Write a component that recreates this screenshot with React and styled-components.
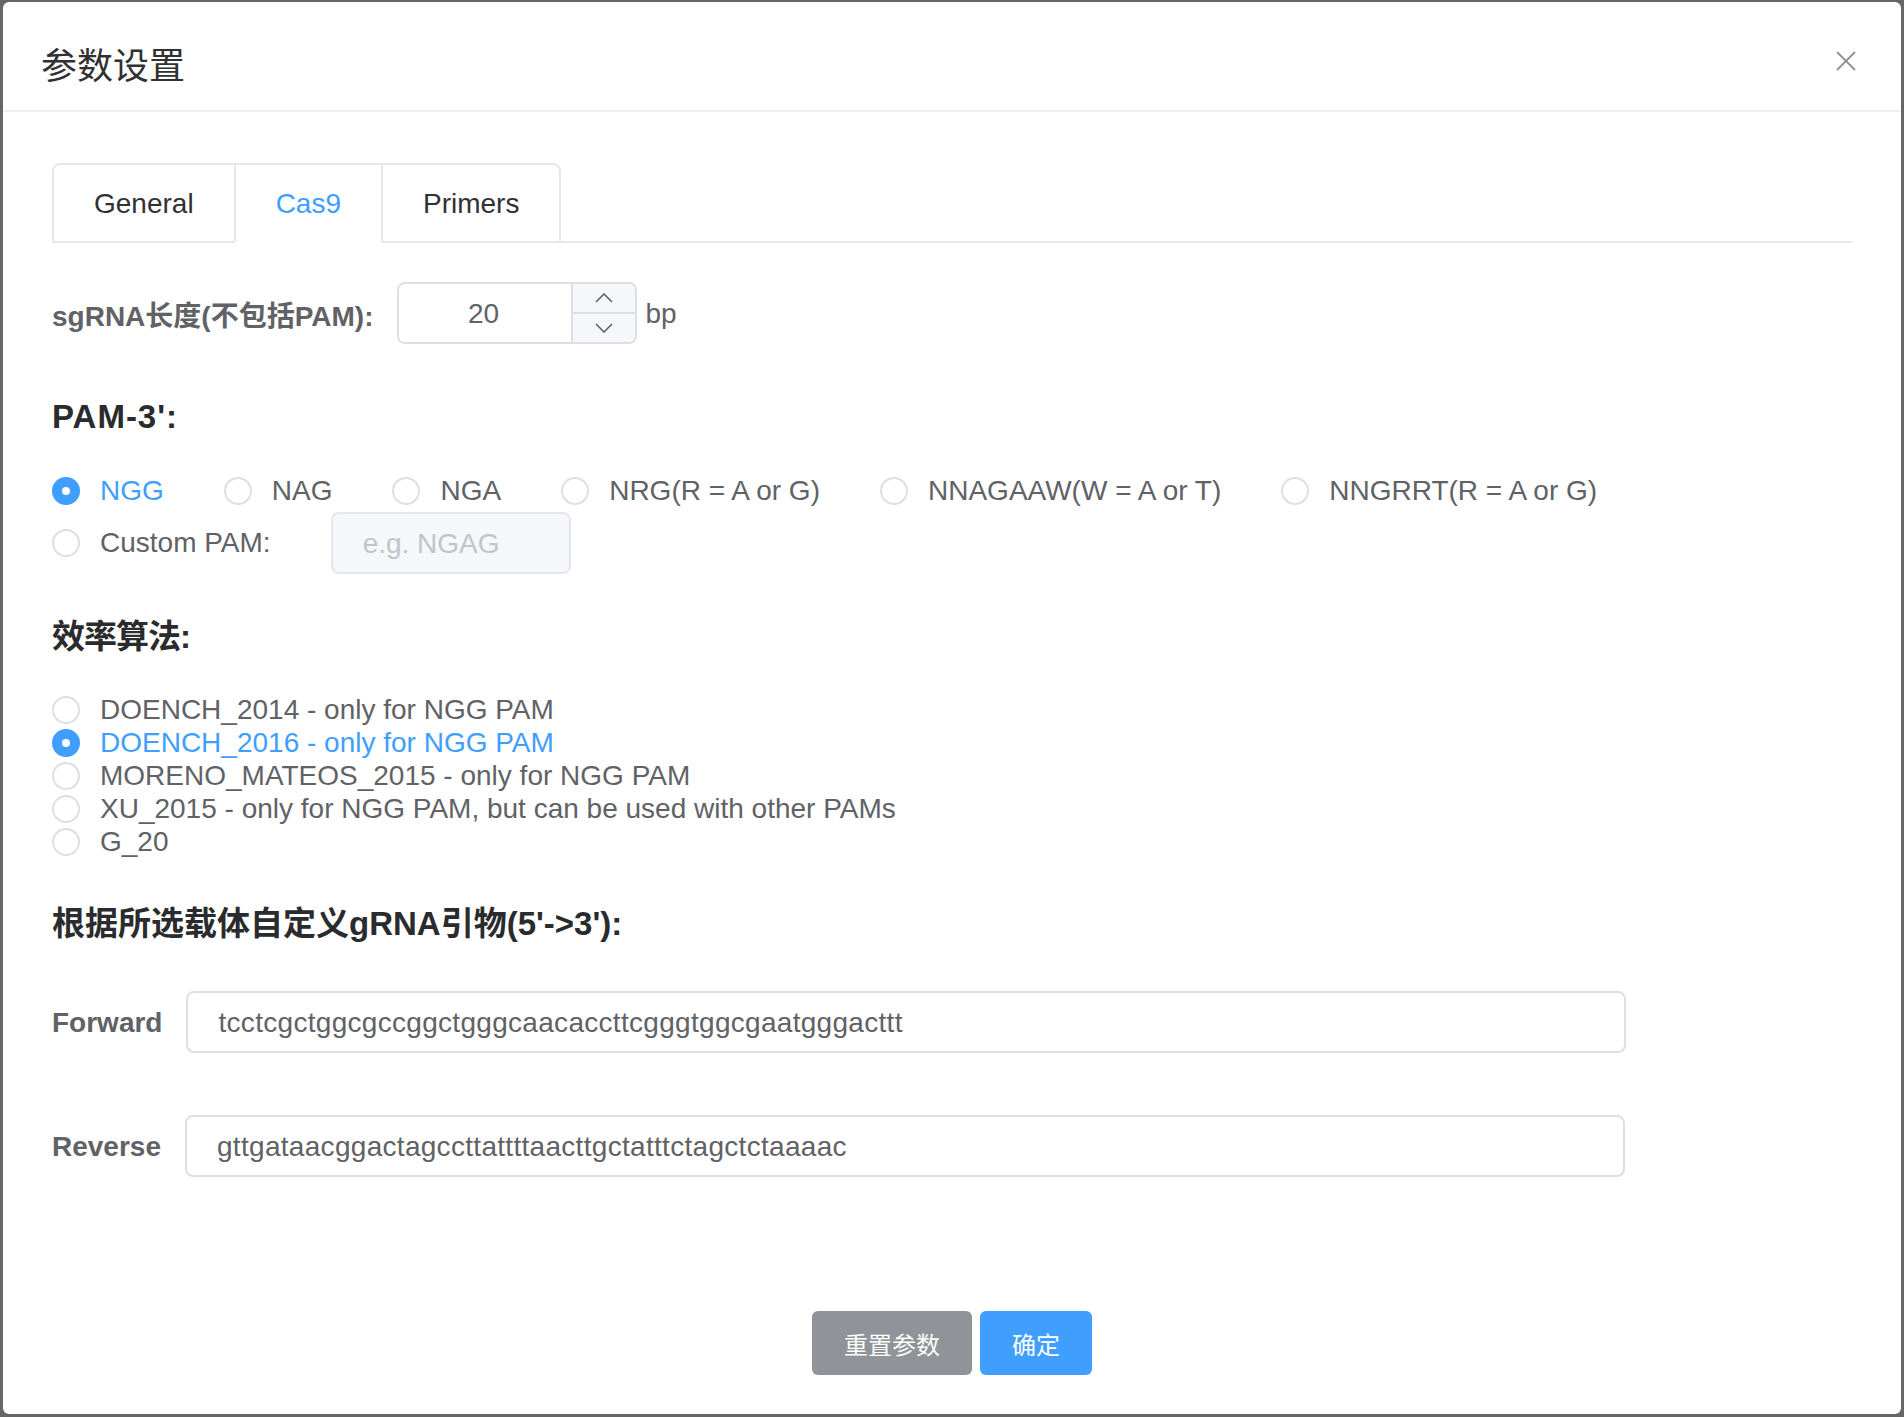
import React from "react";
import styled, { createGlobalStyle } from "styled-components";

const GlobalStyle = createGlobalStyle`
  html, body { margin: 0; padding: 0; }
  body {
    background: #666666;
    font-family: "Liberation Sans", Arial, "Noto Sans CJK SC", sans-serif;
  }
  * { box-sizing: border-box; }
`;

const FONT = `"Liberation Sans", Arial, "Noto Sans CJK SC", sans-serif`;

const Page = styled.div`
  padding: 2px 3px 3px 3px;
  background: #666666;
`;

const Dialog = styled.div`
  background: #ffffff;
  border-radius: 6px;
  height: 1412px;
  display: flex;
  flex-direction: column;
`;

const Header = styled.header`
  position: relative;
  padding: 41px 40px 19px 40px;
  border-bottom: 2px solid #ebeef5;
`;

const Title = styled.span`
  display: block;
  font-size: 36px;
  line-height: 48px;
  color: #303133;
  margin-left: -2px;
  font-family: "Liberation Sans", "Noto Sans CJK SC", sans-serif;
`;

const CloseButton = styled.button`
  position: absolute;
  top: 43px;
  right: 39px;
  width: 32px;
  height: 32px;
  padding: 0;
  border: none;
  background: transparent;
  display: flex;
  align-items: center;
  justify-content: center;
  cursor: pointer;
`;

const Body = styled.div`
  flex: 1;
  padding: 51px 49px 0 49px;
  display: flex;
  flex-direction: column;
`;

const TabsHeader = styled.div`
  display: flex;
  border-bottom: 2px solid #e4e7ed;
`;

const TabNav = styled.div`
  display: flex;
  border: 2px solid #e4e7ed;
  border-bottom: none;
  border-radius: 8px 8px 0 0;
  margin-bottom: -2px;
`;

const Tab = styled.div`
  height: 78px;
  display: flex;
  align-items: center;
  padding: 2px 40px 0 40px;
  font-size: 28px;
  color: ${(p) => (p.$active ? "#409eff" : "#303133")};
  border-bottom: 2px solid ${(p) => (p.$active ? "#ffffff" : "transparent")};
  border-left: ${(p) => (p.$first ? "none" : "2px solid #e4e7ed")};
`;

const FieldRow = styled.div`
  display: flex;
  align-items: center;
  height: 62px;
  margin-top: ${(p) => p.$top}px;
`;

const FieldLabel = styled.label`
  font-size: 28px;
  font-weight: bold;
  color: #606266;
  padding-right: 24px;
  padding-top: 1px;
  white-space: nowrap;
`;

const NumberBox = styled.div`
  display: flex;
  width: 240px;
  height: 62px;
  border: 2px solid #dcdfe6;
  border-radius: 8px;
  overflow: hidden;
`;

const NumberInput = styled.input`
  flex: 1;
  min-width: 0;
  border: none;
  outline: none;
  text-align: center;
  font-family: ${FONT};
  font-size: 28px;
  color: #606266;
  background: #ffffff;
  padding: 2px 4px 0 0;
`;

const Steppers = styled.div`
  width: 64px;
  display: flex;
  flex-direction: column;
  border-left: 2px solid #dcdfe6;
  background: #f5f7fa;
`;

const Stepper = styled.span`
  flex: 1;
  display: flex;
  align-items: center;
  justify-content: center;
  border-top: ${(p) => (p.$down ? "2px solid #dcdfe6" : "none")};
`;

const Unit = styled.span`
  font-size: 28px;
  color: #606266;
  margin-left: 8px;
  padding-top: 1px;
`;

const SectionTitle = styled.h3`
  margin: ${(p) => p.$top}px 0 0 0;
  font-size: 33px;
  line-height: 40px;
  font-weight: bold;
  color: #2a2b2d;
  letter-spacing: ${(p) => p.$spacing || 0}px;
`;

const RadioLine = styled.div`
  display: flex;
  align-items: center;
  height: ${(p) => p.$h}px;
  margin-top: ${(p) => p.$top || 0}px;
`;

const RadioItem = styled.label`
  display: inline-flex;
  align-items: center;
  margin-right: ${(p) => (p.$gap !== undefined ? p.$gap : 60)}px;
  font-size: 28px;
  color: ${(p) => (p.$checked ? "#409eff" : "#606266")};
  white-space: nowrap;
  cursor: pointer;
`;

const RadioCircle = styled.span`
  width: 28px;
  height: 28px;
  border-radius: 50%;
  border: 2px solid ${(p) => (p.$checked ? "#409eff" : "#dcdfe6")};
  background: ${(p) => (p.$checked ? "#409eff" : "#ffffff")};
  display: inline-flex;
  align-items: center;
  justify-content: center;
  margin-right: 20px;
  flex: none;
  &::after {
    content: "";
    width: 8px;
    height: 8px;
    border-radius: 50%;
    background: #ffffff;
    display: ${(p) => (p.$checked ? "block" : "none")};
  }
`;

const AlgoList = styled.div`
  margin-top: 36px;
  display: flex;
  flex-direction: column;
`;

const DisabledInput = styled.input`
  width: 240px;
  height: 62px;
  border: 2px solid #e4e7ed;
  border-radius: 8px;
  background: #f5f7fa;
  padding: 2px 30px 0 30px;
  font-family: ${FONT};
  font-size: 28px;
  color: #c0c4cc;
  &::placeholder { color: #c0c4cc; }
`;

const TextInput = styled.input`
  width: 1440px;
  height: 62px;
  border: 2px solid #dcdfe6;
  border-radius: 8px;
  background: #ffffff;
  padding: 2px 30px 0 30px;
  font-family: ${FONT};
  font-size: 28px;
  letter-spacing: 0.3px;
  color: #606266;
  outline: none;
`;

const Footer = styled.div`
  display: flex;
  justify-content: center;
  gap: 8px;
  padding-bottom: 39px;
`;

const Button = styled.button`
  height: 64px;
  padding: 0 32px;
  border: none;
  border-radius: 6px;
  font-family: ${FONT};
  font-size: 24px;
  color: #ffffff;
  background: ${(p) => (p.$primary ? "#409eff" : "#909399")};
  cursor: pointer;
`;

function Radio({ checked, children, gap }) {
  return (
    <RadioItem $checked={checked} $gap={gap}>
      <RadioCircle $checked={checked} />
      {children}
    </RadioItem>
  );
}

const Chevron = ({ up }) => (
  <svg width="18" height="10" viewBox="0 0 18 10">
    <polyline
      points={up ? "1,9 9,1 17,9" : "1,1 9,9 17,1"}
      fill="none"
      stroke="#606266"
      strokeWidth="1.6"
    />
  </svg>
);

const pams = ["NGG", "NAG", "NGA", "NRG(R = A or G)", "NNAGAAW(W = A or T)", "NNGRRT(R = A or G)"];
const algos = [
  "DOENCH_2014 - only for NGG PAM",
  "DOENCH_2016 - only for NGG PAM",
  "MORENO_MATEOS_2015 - only for NGG PAM",
  "XU_2015 - only for NGG PAM, but can be used with other PAMs",
  "G_20",
];

export default function App() {
  return (
    <Page>
      <GlobalStyle />
      <Dialog>
        <Header>
          <Title>参数设置</Title>
          <CloseButton aria-label="close">
            <svg width="20" height="20" viewBox="0 0 20 20">
              <line x1="1" y1="1" x2="19" y2="19" stroke="#909399" strokeWidth="2" />
              <line x1="19" y1="1" x2="1" y2="19" stroke="#909399" strokeWidth="2" />
            </svg>
          </CloseButton>
        </Header>
        <Body>
          <TabsHeader>
            <TabNav>
              <Tab $first>General</Tab>
              <Tab $active>Cas9</Tab>
              <Tab>Primers</Tab>
            </TabNav>
          </TabsHeader>

          <FieldRow $top={39}>
            <FieldLabel>sgRNA长度(不包括PAM):</FieldLabel>
            <NumberBox>
              <NumberInput readOnly value="20" />
              <Steppers>
                <Stepper><Chevron up /></Stepper>
                <Stepper $down><Chevron /></Stepper>
              </Steppers>
            </NumberBox>
            <Unit>bp</Unit>
          </FieldRow>

          <SectionTitle $top={53} $spacing={1}>PAM-3':</SectionTitle>
          <RadioLine $h={40} $top={34}>
            {pams.map((p, i) => (
              <Radio key={p} checked={i === 0}>{p}</Radio>
            ))}
          </RadioLine>
          <RadioLine $h={62} $top={1}>
            <Radio gap={60}>Custom PAM:</Radio>
            <DisabledInput disabled placeholder="e.g. NGAG" />
          </RadioLine>

          <SectionTitle $top={43} $spacing={-1}>效率算法:</SectionTitle>
          <AlgoList>
            {algos.map((a, i) => (
              <RadioLine key={a} $h={33}>
                <Radio checked={i === 1}>{a}</Radio>
              </RadioLine>
            ))}
          </AlgoList>

          <SectionTitle $top={46}>根据所选载体自定义gRNA引物(5'-&gt;3'):</SectionTitle>
          <FieldRow $top={47}>
            <FieldLabel>Forward</FieldLabel>
            <TextInput readOnly value="tcctcgctggcgccggctgggcaacaccttcgggtggcgaatgggacttt" />
          </FieldRow>
          <FieldRow $top={62}>
            <FieldLabel>Reverse</FieldLabel>
            <TextInput readOnly value="gttgataacggactagccttattttaacttgctatttctagctctaaaac" />
          </FieldRow>
        </Body>
        <Footer>
          <Button>重置参数</Button>
          <Button $primary>确定</Button>
        </Footer>
      </Dialog>
    </Page>
  );
}
